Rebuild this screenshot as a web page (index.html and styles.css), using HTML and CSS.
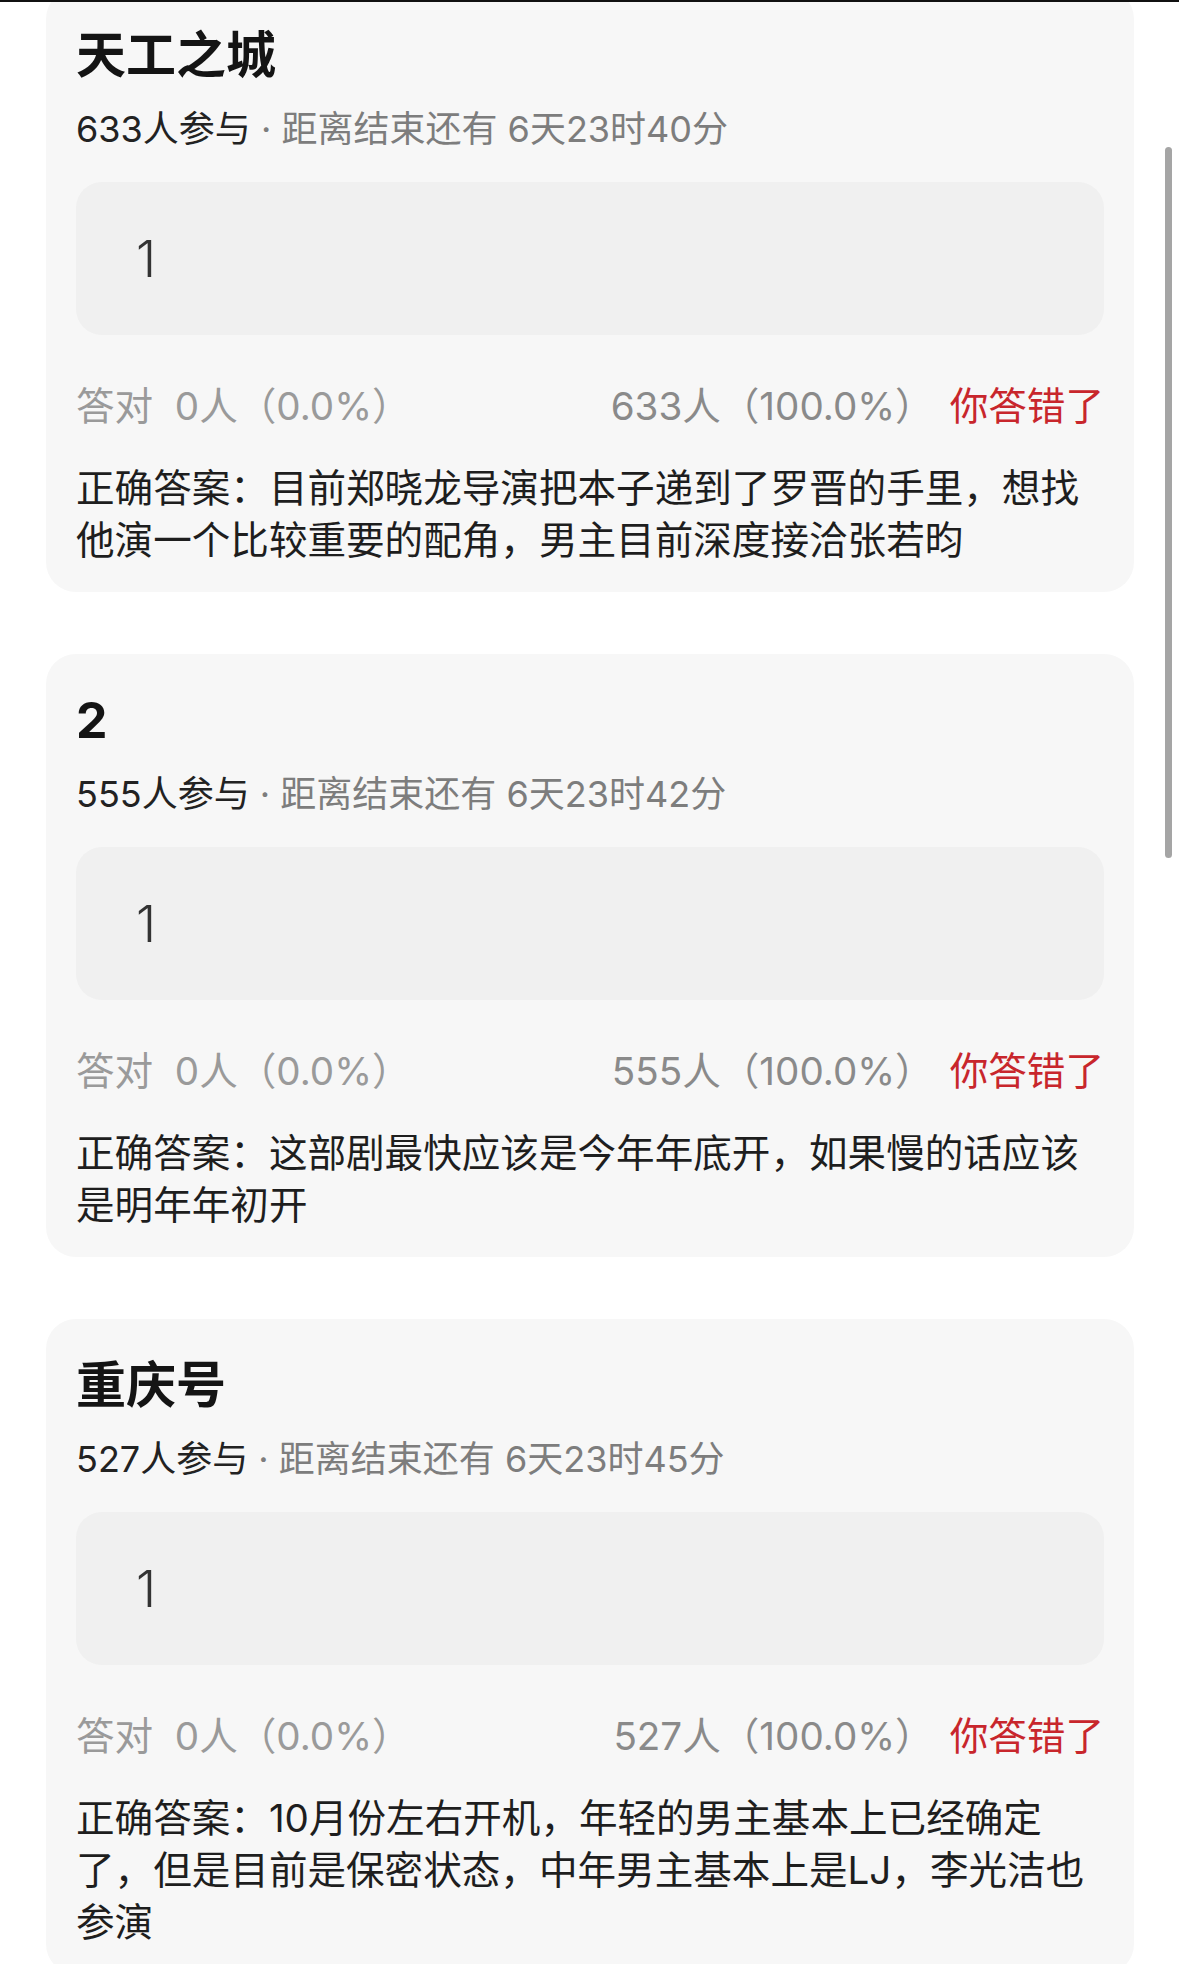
FILE: index.html
```html
<!DOCTYPE html>
<html lang="zh-CN">
<head>
    <meta charset="utf-8">
    <link rel="stylesheet" href="styles.css">
</head>

<body>
    <div class="topline"></div>

    <main class="feed">
        <section class="card">
            <h2 class="card-title">天工之城</h2>
            <p class="meta"><span class="joined">633人参与</span><span class="deadline"> · 距离结束还有 6天23时40分</span></p>
            <div class="answer-box">1</div>
            <div class="stats">
                <span class="right-count">答对&nbsp; 0人（0.0%）</span>
                <span class="wrong-count">633人（100.0%）</span>
                <span class="verdict">你答错了</span>
            </div>
            <p class="solution">正确答案：目前郑晓龙导演把本子递到了罗晋的手里，想找他演一个比较重要的配角，男主目前深度接洽张若昀</p>
        </section>

        <section class="card">
            <h2 class="card-title">2</h2>
            <p class="meta"><span class="joined">555人参与</span><span class="deadline"> · 距离结束还有 6天23时42分</span></p>
            <div class="answer-box">1</div>
            <div class="stats">
                <span class="right-count">答对&nbsp; 0人（0.0%）</span>
                <span class="wrong-count">555人（100.0%）</span>
                <span class="verdict">你答错了</span>
            </div>
            <p class="solution">正确答案：这部剧最快应该是今年年底开，如果慢的话应该是明年年初开</p>
        </section>

        <section class="card">
            <h2 class="card-title">重庆号</h2>
            <p class="meta"><span class="joined">527人参与</span><span class="deadline"> · 距离结束还有 6天23时45分</span></p>
            <div class="answer-box">1</div>
            <div class="stats">
                <span class="right-count">答对&nbsp; 0人（0.0%）</span>
                <span class="wrong-count">527人（100.0%）</span>
                <span class="verdict">你答错了</span>
            </div>
            <p class="solution">正确答案：10月份左右开机，年轻的男主基本上已经确定了，但是目前是保密状态，中年男主基本上是LJ，李光洁也参演</p>
        </section>
    </main>

    <div class="scrollbar"></div>
</body>
</html>
```

FILE: styles.css
```css
body {
    margin: 0;
    background: #ffffff;
    font-family: Inter, "Noto Sans CJK SC", sans-serif;
    color: #1c1c1c;
    position: relative;
    height: 1964px;
    overflow: hidden;
}

.topline {
    height: 2px;
    background: #111111;
}

.feed {
    overflow: hidden;
    padding: 0 45px 0 46px;
}

.card {
    background: #f7f7f7;
    border-radius: 30px;
    padding: 30px 30px 26px;
    margin-bottom: 62px;
}
.card:first-child {
    margin-top: -13px;
}

.card-title {
    margin: 0;
    font-size: 50px;
    line-height: 72px;
    font-weight: bold;
    color: #141414;
}

.meta {
    margin: 15px 0 0;
    font-size: 36px;
    line-height: 46px;
}
.joined {
    color: #222222;
}
.deadline {
    color: #7d7d7d;
}

.answer-box {
    margin-top: 30px;
    height: 153px;
    background: #f0f0f0;
    border-radius: 26px;
    padding-left: 60px;
    display: flex;
    align-items: center;
    font-size: 51px;
    font-weight: 300;
    color: #333333;
}

.stats {
    margin-top: 45px;
    display: flex;
    align-items: center;
    font-size: 38.6px;
    line-height: 52px;
}
.right-count {
    color: #9a9a9a;
}
.wrong-count {
    margin-left: auto;
    color: #8a8a8a;
}
.verdict {
    margin-left: 16px;
    color: #c8262c;
}

.solution {
    margin: 30px 0 0;
    font-size: 38.6px;
    line-height: 52px;
    color: #1e1e1e;
}

.scrollbar {
    position: absolute;
    top: 147px;
    right: 7px;
    width: 7px;
    height: 711px;
    border-radius: 4px;
    background: #a5a5a5;
}
```
